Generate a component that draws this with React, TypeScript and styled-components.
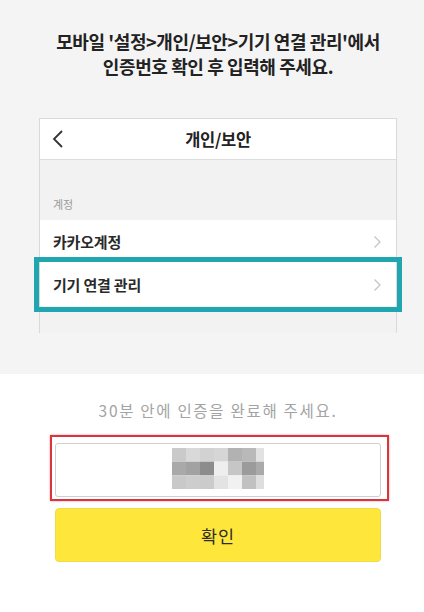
import React from "react";
import styled, { createGlobalStyle } from "styled-components";

const Global = createGlobalStyle`
  html, body { margin: 0; padding: 0; background: #ffffff; }
  body { font-family: "Noto Sans CJK KR", "Noto Sans", sans-serif; }
  * { box-sizing: border-box; }
`;

const Page = styled.div`
  width: 424px;
  height: 612px;
  overflow: hidden;
  display: flex;
  flex-direction: column;
  background: #ffffff;
`;

const TopSection = styled.section`
  background: #f4f4f4;
  height: 374px;
  padding-top: 29px;
  display: flex;
  flex-direction: column;
`;

const Heading = styled.h1`
  margin: 0;
  padding-left: 12px;
  text-align: center;
  font-size: 18px;
  font-weight: 700;
  line-height: 25px;
  color: #222222;
  letter-spacing: -0.4px;
`;

const Phone = styled.div`
  margin-top: 39px;
  margin-left: 39px;
  width: 358px;
  height: 215px;
  border: 1px solid #d9d9d9;
  border-bottom: none;
  background: #f2f2f2;
  display: flex;
  flex-direction: column;
`;

const PhoneHeader = styled.div`
  height: 41px;
  flex-shrink: 0;
  background: #ffffff;
  border-bottom: 1px solid #dddddd;
  display: grid;
  grid-template-columns: 40px 1fr 40px;
  align-items: center;
`;

const Back = styled.div`
  display: flex;
  align-items: center;
  padding-left: 12px;
`;

const HeaderTitle = styled.div`
  text-align: center;
  font-size: 16.5px;
  font-weight: 700;
  color: #222222;
  letter-spacing: -0.3px;
`;

const SectionLabel = styled.div`
  height: 60px;
  flex-shrink: 0;
  padding: 0 0 8px 13px;
  display: flex;
  align-items: flex-end;
  font-size: 11px;
  color: #9a9a9a;
`;

const Row = styled.div<{ $highlight?: boolean }>`
  height: 43px;
  flex-shrink: 0;
  background: #ffffff;
  display: flex;
  align-items: center;
  justify-content: space-between;
  padding: 0 14px 0 13px;
  font-size: 15px;
  font-weight: 700;
  color: #2a2a2a;
  letter-spacing: -0.2px;
  ${(p) => p.$highlight && `outline: 5px solid #1fa6b1; outline-offset: 1px;`}
`;

const BottomSection = styled.section`
  flex: 1;
  padding-top: 26px;
  display: flex;
  flex-direction: column;
`;

const Notice = styled.p`
  margin: 0;
  padding-left: 12px;
  text-align: center;
  font-size: 15.5px;
  line-height: 21px;
  color: #a3a3a3;
  letter-spacing: 1.7px;
`;

const RedFrame = styled.div`
  margin-top: 14px;
  margin-left: 50px;
  width: 339px;
  height: 66px;
  border: 2.5px solid #d8353c;
  box-shadow: 0 0 2px rgba(216, 53, 60, 0.5);
  padding: 5.5px 5px 1px 2.5px;
`;

const CodeInput = styled.div`
  width: 326px;
  height: 54px;
  border: 1px solid #cfcfcf;
  border-radius: 3px;
  background: #ffffff;
  display: flex;
  align-items: center;
  justify-content: center;
  padding-bottom: 3px;
`;

const Mosaic = styled.svg`
  display: block;
`;

const ConfirmButton = styled.button`
  margin-top: 7px;
  margin-left: 55px;
  width: 326px;
  height: 54px;
  border: 1px solid #eedc4a;
  border-radius: 4px;
  background: #fee73a;
  font-family: "Noto Sans CJK KR", "Noto Sans", sans-serif;
  font-size: 17.5px;
  font-weight: 400;
  color: #2e2e2e;
  letter-spacing: 1px;
  cursor: pointer;
`;

const mosaic = [
  ["#cacaca", "#d9d9d9", "#d2d2d2", "#d6d6d6", "#b2b2b2", "#b9b9b9", "#e2e2e2"],
  ["#a9a9a9", "#a2a2a2", "#8c8c8c", "#eeeeee", "#c6c6c6", "#9b9b9b", "#aaaaaa"],
  ["#c9c9c9", "#cdcdcd", "#cbcbcb", "#e3e3e3", "#f1f1f1", "#c1c1c1", "#dedede"],
];

const Chevron = () => (
  <svg width="9" height="14" viewBox="0 0 9 14">
    <path d="M1.5 1.5 L7 7 L1.5 12.5" fill="none" stroke="#c4c4c4" strokeWidth="1.3" />
  </svg>
);

export default function App() {
  return (
    <Page>
      <Global />
      <TopSection>
        <Heading>
          모바일 '설정&gt;개인/보안&gt;기기 연결 관리'에서
          <br />
          인증번호 확인 후 입력해 주세요.
        </Heading>
        <Phone>
          <PhoneHeader>
            <Back>
              <svg width="12" height="20" viewBox="0 0 12 20">
                <path d="M10 2 L2 10 L10 18" fill="none" stroke="#333" strokeWidth="1.8" />
              </svg>
            </Back>
            <HeaderTitle>개인/보안</HeaderTitle>
            <div />
          </PhoneHeader>
          <SectionLabel>계정</SectionLabel>
          <Row>
            카카오계정
            <Chevron />
          </Row>
          <Row $highlight>
            기기 연결 관리
            <Chevron />
          </Row>
        </Phone>
      </TopSection>
      <BottomSection>
        <Notice>30분 안에 인증을 완료해 주세요.</Notice>
        <RedFrame>
          <CodeInput>
            <Mosaic width="92" height="41" viewBox="0 0 92 41">
              {mosaic.map((row, r) =>
                row.map((c, i) => (
                  <rect
                    key={`${r}-${i}`}
                    x={i * 14}
                    y={r * 13.7}
                    width={i === 6 ? 8 : 14}
                    height={13.7}
                    fill={c}
                  />
                ))
              )}
            </Mosaic>
          </CodeInput>
        </RedFrame>
        <ConfirmButton>확인</ConfirmButton>
      </BottomSection>
    </Page>
  );
}
